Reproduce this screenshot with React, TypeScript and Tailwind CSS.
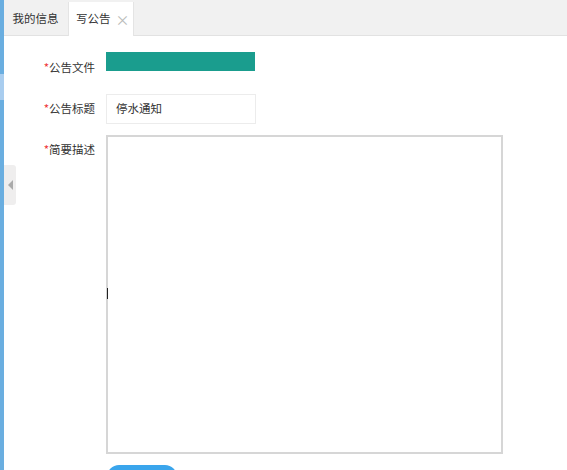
import React from "react";

const font = { fontFamily: '"Noto Sans CJK SC", "Noto Sans", sans-serif' };

function Label({ text }: { text: string }) {
  return (
    <div className="w-[91px] shrink-0 whitespace-nowrap text-right text-[11.5px] text-[#333]">
      <span className="text-[#e33]">*</span>
      {text}
    </div>
  );
}

export default function App() {
  return (
    <div className="relative flex h-[470px] w-[567px] overflow-hidden bg-white" style={font}>
      {/* left side strip */}
      <div className="flex w-[4px] shrink-0 flex-col">
        <div className="h-[74px] bg-[#6aaee0]" />
        <div className="h-[26px] bg-[#a9cdef]" />
        <div className="flex-1 bg-[#6aaee0]" />
      </div>

      <div className="flex min-w-0 flex-1 flex-col">
        {/* tab bar */}
        <div className="flex h-[36px] shrink-0 items-end border-b border-[#e2e2e2] bg-[#f1f1f1] pt-[3px]">
          <div className="flex h-[33px] w-[63px] items-center justify-center whitespace-nowrap text-[11.5px] text-[#333]">
            我的信息
          </div>
          <div className="ml-[1px] -mb-px flex h-[34px] w-[66px] items-center gap-[5px] whitespace-nowrap border-x border-[#e4e4e4] bg-white pl-[7px] text-[11.5px] text-[#333]">
            <span>写公告</span>
            <span className="text-[14px] leading-none text-[#bbb]">×</span>
          </div>
        </div>

        {/* form */}
        <div className="relative flex flex-col pt-[16px]">
          <div className="flex h-[19px] items-start">
            <div className="pt-[7px]">
              <Label text="公告文件" />
            </div>
            <div className="ml-[11px] h-[19px] w-[149px] bg-[#1a9d8e]" />
          </div>

          <div className="mt-[23px] flex items-center">
            <Label text="公告标题" />
            <div className="ml-[11px] flex h-[30px] w-[150px] items-center border border-[#ececec] pl-[9px] text-[11.5px] text-[#333]">
              停水通知
            </div>
          </div>

          <div className="mt-[11px] flex items-start">
            <div className="pt-[6px]">
              <Label text="简要描述" />
            </div>
            <div className="relative ml-[11px] h-[319px] w-[397px] border-2 border-[#d6d6d6]">
              <div className="absolute left-[-1px] top-[151px] h-[11px] w-[1px] bg-[#222]" />
            </div>
          </div>

          <div className="mt-[11px] pl-[103px]">
            <div className="h-[24px] w-[70px] rounded-[12px] bg-[#3aa5ec]" />
          </div>

          {/* collapse handle */}
          <div className="absolute left-0 top-[129px] flex h-[40px] w-[12px] items-center justify-center rounded-r-[3px] bg-[#efeeee]">
            <div className="h-0 w-0 border-y-[5px] border-r-[5px] border-y-transparent border-r-[#aaa]" />
          </div>
        </div>
      </div>
    </div>
  );
}
